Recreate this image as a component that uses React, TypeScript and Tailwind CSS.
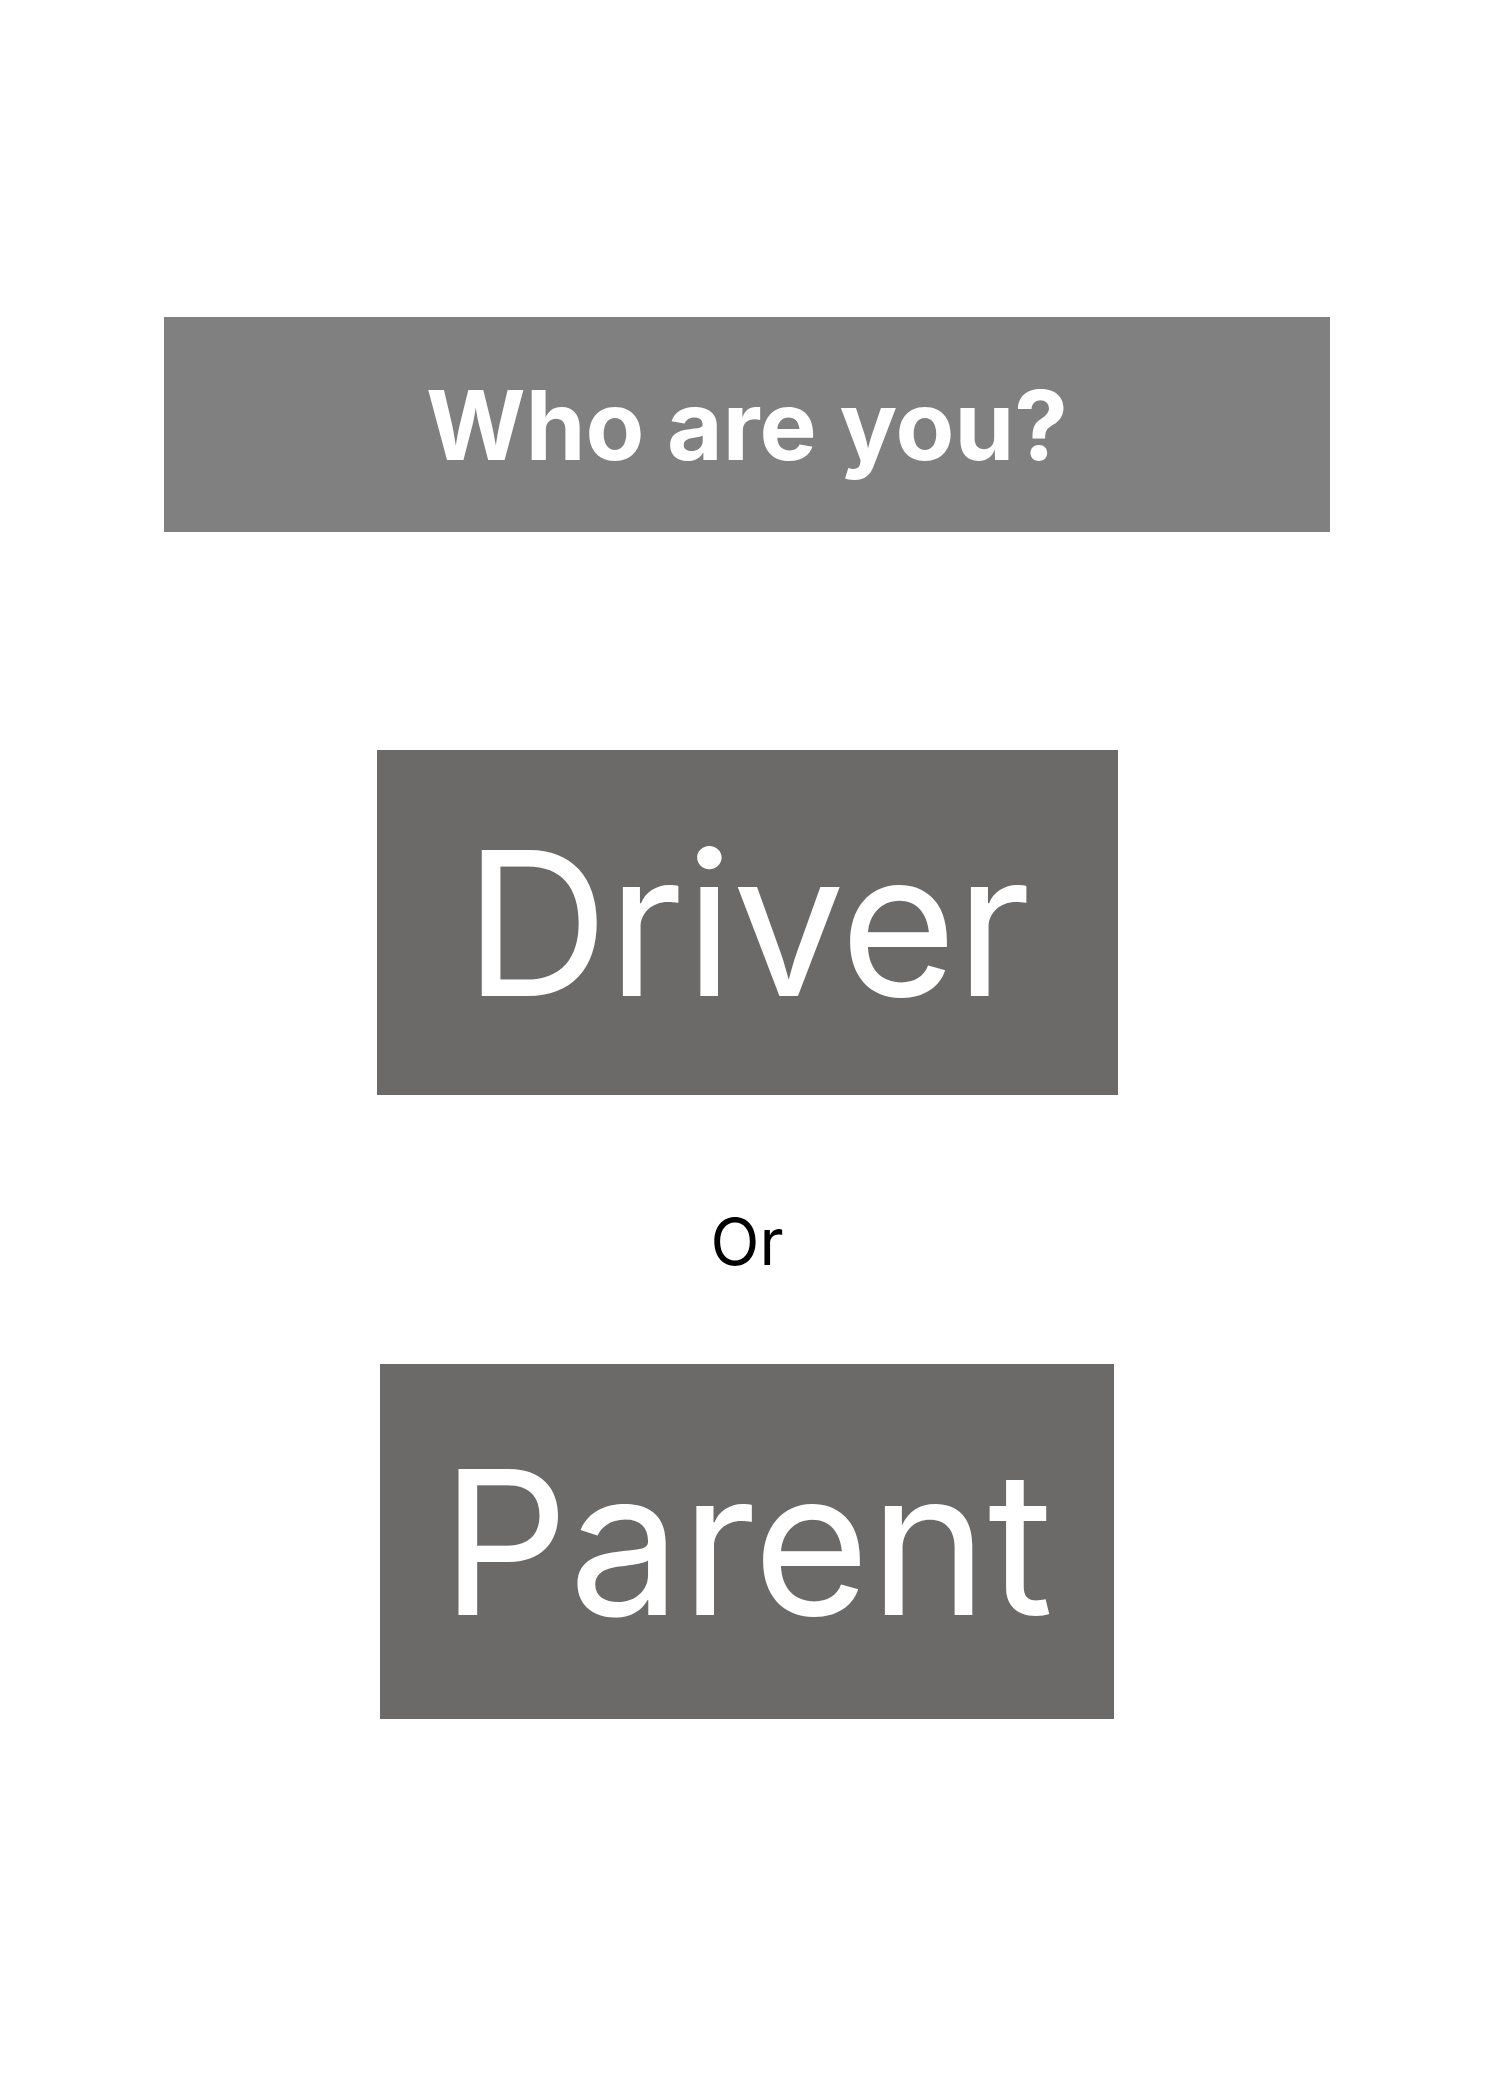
import React from 'react';

const font = "font-['Inter','Liberation_Sans',sans-serif]";

const RoleButton: React.FC<{ label: string; className: string }> = ({ label, className }) => (
  <button
    type="button"
    className={`flex items-center justify-center bg-[#6b6a68] text-white font-normal leading-none ${className}`}
  >
    {label}
  </button>
);

export default function App() {
  return (
    <div className={`flex min-h-[2090px] w-full flex-col items-center bg-white ${font}`}>
      <div className="mt-[317px] flex h-[215px] w-[1166px] items-center justify-center bg-[#808080]">
        <h1 className="text-[96px] font-bold leading-none text-white">Who are you?</h1>
      </div>
      <RoleButton label="Driver" className="mt-[218px] h-[345px] w-[741px] text-[200px] tracking-[-0.005em]" />
      <p className="mt-[115px] text-[64px] leading-none text-black">Or</p>
      <RoleButton label="Parent" className="mt-[90px] h-[355px] w-[734px] text-[200px]" />
    </div>
  );
}
